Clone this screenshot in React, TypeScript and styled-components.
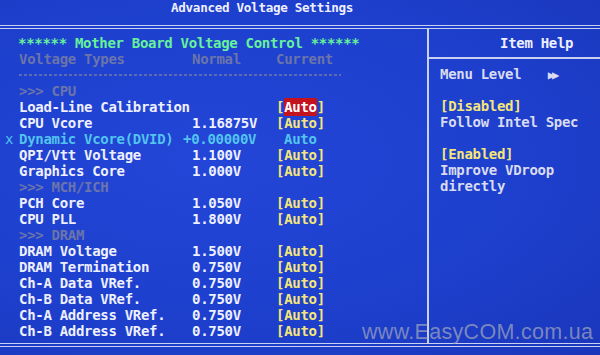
import React from 'react';
import styled, { createGlobalStyle } from 'styled-components';

const colors = {
  bg: '#1d3fcc',
  frame: '#c9d0f2',
  white: '#eef0ff',
  yellow: '#f6e678',
  green: '#66f29a',
  cyan: '#52c4ee',
  dim: '#6b75aa',
  red: '#c4121e',
  help: '#d9dcf0',
};

const GlobalStyle = createGlobalStyle`
  html, body {
    margin: 0;
    padding: 0;
    background: ${colors.bg};
  }
`;

const Screen = styled.div`
  position: relative;
  width: 600px;
  height: 355px;
  overflow: hidden;
  background: radial-gradient(ellipse at 35% 45%, #2346d8 0%, ${colors.bg} 60%, #1a37bb 100%);
  font-family: 'DejaVu Sans Mono', 'Liberation Mono', monospace;
  font-weight: bold;
  font-size: 14px;
  letter-spacing: -0.3px;
  color: ${colors.white};
`;

const TitleBar = styled.div`
  height: 25px;
  box-sizing: border-box;
  padding-left: 171px;
  line-height: 16px;
  font-size: 12.6px;
  color: ${colors.white};
`;

const Frame = styled.div`
  display: grid;
  grid-template-columns: 427px 1fr;
  height: 322px;
  box-sizing: border-box;
  border-top: 4px double ${colors.frame};
  border-bottom: 4px double ${colors.frame};
`;

const MainPanel = styled.div`
  padding: 6px 0 0 19px;
`;

const Line = styled.div<{ $color?: string }>`
  height: 16px;
  line-height: 16px;
  white-space: pre;
  color: ${(p) => p.$color || colors.white};
`;

const Heading = styled(Line)`
  margin-left: -1px;
`;

const ItemRow = styled.div<{ $color?: string }>`
  display: grid;
  grid-template-columns: 173px 84px auto;
  height: 16px;
  line-height: 16px;
  white-space: pre;
  color: ${(p) => p.$color || colors.white};
`;

const Label = styled.span``;

const Marker = styled.span`
  display: inline-block;
  width: 14px;
  margin-left: -14px;
  font-weight: normal;
`;

const Value = styled.span<{ $signed?: boolean }>`
  margin-left: ${(p) => (p.$signed ? '-9px' : '0')};
`;

const Current = styled.span<{ $plain?: boolean }>`
  color: ${(p) => (p.$plain ? colors.cyan : colors.yellow)};
  padding-left: ${(p) => (p.$plain ? '8px' : '0')};
`;

const Highlight = styled.span`
  background: ${colors.red};
  color: #ffffff;
  padding: 1px 0;
`;

const Rule = styled.div`
  height: 16px;
  display: flex;
  align-items: center;

  &::after {
    content: '';
    width: 322px;
    height: 2px;
    background: repeating-linear-gradient(90deg, ${colors.dim} 0 3px, transparent 3px 5px);
    opacity: 0.8;
  }
`;

const HelpPanel = styled.div`
  display: flex;
  flex-direction: column;
  border-left: 2px solid ${colors.frame};
`;

const HelpHeader = styled.div`
  height: 28px;
  line-height: 28px;
  padding-left: 71px;
  border-bottom: 2px solid ${colors.frame};
`;

const HelpBody = styled.div`
  padding: 7px 0 0 11px;
  color: ${colors.help};
`;

const Arrows = styled.span`
  font-size: 12px;
  letter-spacing: -3px;
  padding-left: 2px;
`;

const Watermark = styled.div`
  position: absolute;
  left: 362px;
  top: 320px;
  font-family: 'Liberation Sans', Arial, sans-serif;
  font-weight: normal;
  font-size: 21.5px;
  letter-spacing: 0.3px;
  color: rgba(160, 166, 190, 0.72);
`;

type Row =
  | { kind: 'section'; text: string }
  | { kind: 'item'; label: string; value?: string; current?: string; active?: boolean; locked?: boolean };

const rows: Row[] = [
  { kind: 'section', text: '>>> CPU' },
  { kind: 'item', label: 'Load-Line Calibration', active: true },
  { kind: 'item', label: 'CPU Vcore', value: '1.16875V' },
  { kind: 'item', label: 'Dynamic Vcore(DVID)', value: '+0.00000V', locked: true },
  { kind: 'item', label: 'QPI/Vtt Voltage', value: '1.100V' },
  { kind: 'item', label: 'Graphics Core', value: '1.000V' },
  { kind: 'section', text: '>>> MCH/ICH' },
  { kind: 'item', label: 'PCH Core', value: '1.050V' },
  { kind: 'item', label: 'CPU PLL', value: '1.800V' },
  { kind: 'section', text: '>>> DRAM' },
  { kind: 'item', label: 'DRAM Voltage', value: '1.500V' },
  { kind: 'item', label: 'DRAM Termination', value: '0.750V' },
  { kind: 'item', label: 'Ch-A Data VRef.', value: '0.750V' },
  { kind: 'item', label: 'Ch-B Data VRef.', value: '0.750V' },
  { kind: 'item', label: 'Ch-A Address VRef.', value: '0.750V' },
  { kind: 'item', label: 'Ch-B Address VRef.', value: '0.750V' },
];

const CurrentCell: React.FC<{ row: Extract<Row, { kind: 'item' }> }> = ({ row }) => {
  const text = row.current || 'Auto';
  if (row.locked) return <Current $plain>{text}</Current>;
  return (
    <Current>
      [{row.active ? <Highlight>{text}</Highlight> : text}]
    </Current>
  );
};

export default function App() {
  return (
    <>
      <GlobalStyle />
      <Screen>
        <TitleBar>Advanced Voltage Settings</TitleBar>
        <Frame>
          <MainPanel>
            <Heading $color={colors.green}>****** Mother Board Voltage Control ******</Heading>
            <ItemRow $color={colors.dim}>
              <Label>Voltage Types</Label>
              <Value>Normal</Value>
              <span>Current</span>
            </ItemRow>
            <Rule />
            {rows.map((row, i) =>
              row.kind === 'section' ? (
                <Line key={i} $color={colors.dim}>
                  {row.text}
                </Line>
              ) : (
                <ItemRow key={i} $color={row.locked ? colors.cyan : undefined}>
                  <Label>
                    {row.locked && <Marker>x</Marker>}
                    {row.label}
                  </Label>
                  <Value $signed={row.value?.startsWith('+')}>{row.value || ''}</Value>
                  <CurrentCell row={row} />
                </ItemRow>
              )
            )}
          </MainPanel>
          <HelpPanel>
            <HelpHeader>Item Help</HelpHeader>
            <HelpBody>
              <Line $color={colors.help}>
                Menu Level   <Arrows>▶▶</Arrows>
              </Line>
              <Line />
              <Line $color={colors.yellow}>[Disabled]</Line>
              <Line $color={colors.help}>Follow Intel Spec</Line>
              <Line />
              <Line $color={colors.yellow}>[Enabled]</Line>
              <Line $color={colors.help}>Improve VDroop</Line>
              <Line $color={colors.help}>directly</Line>
            </HelpBody>
          </HelpPanel>
        </Frame>
        <Watermark>www.EasyCOM.com.ua</Watermark>
      </Screen>
    </>
  );
}
